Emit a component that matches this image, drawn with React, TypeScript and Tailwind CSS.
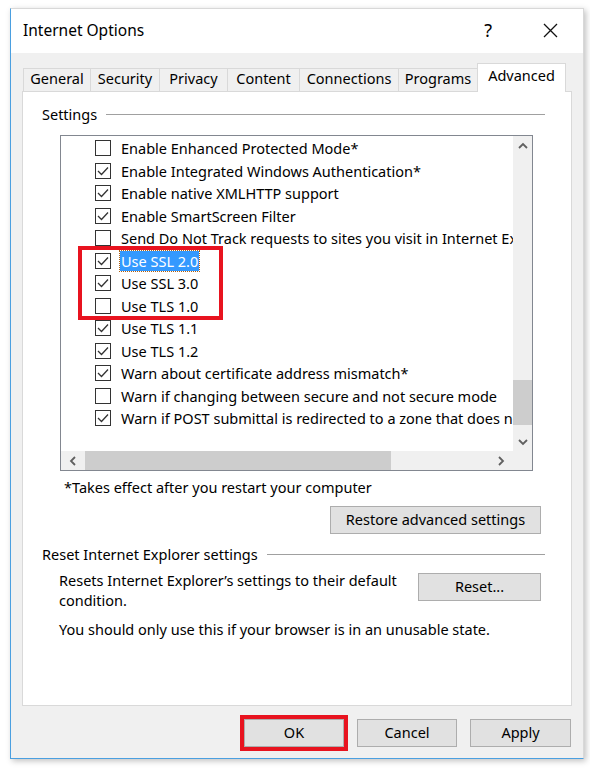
import React from "react";

const font = { fontFamily: '"Noto Sans", "Open Sans", sans-serif' };

const tabs: { label: string; w: string }[] = [
  { label: "General", w: "w-[68px]" },
  { label: "Security", w: "w-[70px]" },
  { label: "Privacy", w: "w-[69px]" },
  { label: "Content", w: "w-[73px]" },
  { label: "Connections", w: "w-[100px]" },
  { label: "Programs", w: "w-[80px]" },
];

const items: { label: string; checked: boolean; selected?: boolean }[] = [
  { label: "Enable Enhanced Protected Mode*", checked: false },
  { label: "Enable Integrated Windows Authentication*", checked: true },
  { label: "Enable native XMLHTTP support", checked: true },
  { label: "Enable SmartScreen Filter", checked: true },
  { label: "Send Do Not Track requests to sites you visit in Internet Explorer*", checked: false },
  { label: "Use SSL 2.0", checked: true, selected: true },
  { label: "Use SSL 3.0", checked: true },
  { label: "Use TLS 1.0", checked: false },
  { label: "Use TLS 1.1", checked: true },
  { label: "Use TLS 1.2", checked: true },
  { label: "Warn about certificate address mismatch*", checked: true },
  { label: "Warn if changing between secure and not secure mode", checked: false },
  { label: "Warn if POST submittal is redirected to a zone that does not permit posts", checked: true },
];

function CheckBox({ checked }: { checked: boolean }) {
  return (
    <div className="w-[16px] h-[16px] shrink-0 border border-[#333333] bg-white flex items-center justify-center">
      {checked && (
        <svg width="12" height="10" viewBox="0 0 12 10">
          <polyline points="1,5 4.5,8.5 11,1.5" fill="none" stroke="#333333" strokeWidth="1.3" />
        </svg>
      )}
    </div>
  );
}

function Chevron({ dir }: { dir: "up" | "down" | "left" | "right" }) {
  const pts = {
    up: "1,6 5,2 9,6",
    down: "1,2 5,6 9,2",
    left: "6,1 2,5 6,9",
    right: "2,1 6,5 2,9",
  }[dir];
  const vertical = dir === "up" || dir === "down";
  return (
    <svg width={vertical ? 10 : 8} height={vertical ? 8 : 10} viewBox={vertical ? "0 0 10 8" : "0 0 8 10"}>
      <polyline points={pts} fill="none" stroke="#606060" strokeWidth="1.8" />
    </svg>
  );
}

function WinButton({ children, className = "" }: { children: React.ReactNode; className?: string }) {
  return (
    <div
      className={`h-[28px] bg-[#e1e1e1] border border-[#adadad] flex items-center justify-center text-[14.5px] text-black ${className}`}
    >
      {children}
    </div>
  );
}

function GroupHeader({ title }: { title: string }) {
  return (
    <div className="flex items-center gap-[9px] text-[14.5px] text-black leading-[20px]">
      <span>{title}</span>
      <div className="flex-1 h-px bg-[#a0a0a0]" />
    </div>
  );
}

export default function App() {
  return (
    <div className="min-h-[768px] bg-white pt-[8px] pl-[10px]" style={font}>
      <div className="w-[574px] h-[751px] bg-[#f0f0f0] border border-[#d8d8d8] border-l-[#4a9fe0] border-b-[#4a9fe0] shadow-[2px_2px_6px_rgba(0,0,0,0.25)] flex flex-col">
        {/* title bar */}
        <div className="h-[44px] bg-white flex items-center pl-[12px] pr-[25px] pb-[1px]">
          <span className="text-[15.5px] text-black">Internet Options</span>
          <span className="ml-auto text-[18px] text-black mr-[51px]">?</span>
          <svg width="15" height="15" viewBox="0 0 15 15">
            <path d="M1 1 L14 14 M14 1 L1 14" stroke="#111" strokeWidth="1.3" />
          </svg>
        </div>

        <div className="flex-1 px-[11px] pt-[10px] flex flex-col">
          {/* tabs */}
          <div className="flex items-end h-[28px] pl-[1px]">
            {tabs.map((t) => (
              <div
                key={t.label}
                className={`${t.w} h-[23px] pb-[3px] border border-b-0 border-[#d9d9d9] -mr-px bg-[#f0f0f0] flex items-center justify-center text-[14.5px] text-black`}
              >
                {t.label}
              </div>
            ))}
            <div className="relative z-10 h-[29px] -mb-px w-[89px] bg-white border border-b-0 border-[#d9d9d9] flex items-start justify-center text-[14.5px] leading-[22px] text-black">
              Advanced
            </div>
          </div>

          {/* panel */}
          <div className="h-[615px] w-[550px] bg-white border border-[#d9d9d9] pl-[19px] pr-[26px] pt-[12px]">
            <GroupHeader title="Settings" />

            <div className="ml-[18px] mt-[11px] w-[473px] h-[336px] border border-[#828790] flex flex-col">
              <div className="flex flex-1 min-h-0">
                <div className="relative flex-1 overflow-hidden pt-[1px]">
                  {items.map((it) => (
                    <div key={it.label} className="h-[22.5px] flex items-center pl-[34px] whitespace-nowrap">
                      <CheckBox checked={it.checked} />
                      <span
                        className={`ml-[9px] text-[14.5px] leading-[20px] px-[1px] ${
                          it.selected
                            ? "bg-[#3399ff] text-white outline outline-1 outline-dotted outline-[#b06010]"
                            : "text-black"
                        }`}
                      >
                        {it.label}
                      </span>
                    </div>
                  ))}
                  <div className="absolute left-[17px] top-[110px] w-[145px] h-[74px] border-4 border-[#e8131f]" />
                </div>
                {/* vertical scrollbar */}
                <div className="w-[19px] bg-[#f0f0f0] flex flex-col items-center">
                  <div className="h-[19px] flex items-center justify-center">
                    <Chevron dir="up" />
                  </div>
                  <div className="flex-1 w-full flex flex-col justify-end pb-[7px]">
                    <div className="h-[45px] w-full bg-[#cdcdcd]" />
                  </div>
                  <div className="h-[19px] flex items-center justify-center">
                    <Chevron dir="down" />
                  </div>
                </div>
              </div>
              {/* horizontal scrollbar */}
              <div className="h-[19px] flex">
                <div className="flex-1 bg-[#f0f0f0] flex items-center">
                  <div className="w-[24px] flex items-center justify-center">
                    <Chevron dir="left" />
                  </div>
                  <div className="w-[306px] h-full bg-[#cdcdcd]" />
                  <div className="flex-1" />
                  <div className="w-[24px] flex items-center justify-center">
                    <Chevron dir="right" />
                  </div>
                </div>
                <div className="w-[19px] bg-[#f0f0f0]" />
              </div>
            </div>

            <div className="ml-[22px] mt-[6px] text-[14.5px] leading-[20px] text-black">
              *Takes effect after you restart your computer
            </div>
            <div className="flex justify-end mt-[9px] pr-[4px]">
              <WinButton className="w-[211px]">Restore advanced settings</WinButton>
            </div>

            <div className="mt-[10px]">
              <GroupHeader title="Reset Internet Explorer settings" />
            </div>
            <div className="flex pl-[17px] pr-[4px] mt-[5px]">
              <div className="flex-1 text-[14.5px] leading-[20px] text-black pt-[1px]">
                Resets Internet Explorer’s settings to their default
                <br />
                condition.
              </div>
              <WinButton className="w-[123px] mt-[4px]">Reset...</WinButton>
            </div>
            <div className="pl-[17px] mt-[9px] text-[14.5px] leading-[20px] text-black">
              You should only use this if your browser is in an unusable state.
            </div>
          </div>

          {/* footer buttons */}
          <div className="flex justify-end gap-[13px] mt-[13px] pr-[1px]">
            <WinButton className="w-[100px] border-[#0078d7] ring-4 ring-offset-0 ring-[#e8131f]">OK</WinButton>
            <WinButton className="w-[100px]">Cancel</WinButton>
            <WinButton className="w-[101px]">Apply</WinButton>
          </div>
        </div>
      </div>
    </div>
  );
}
